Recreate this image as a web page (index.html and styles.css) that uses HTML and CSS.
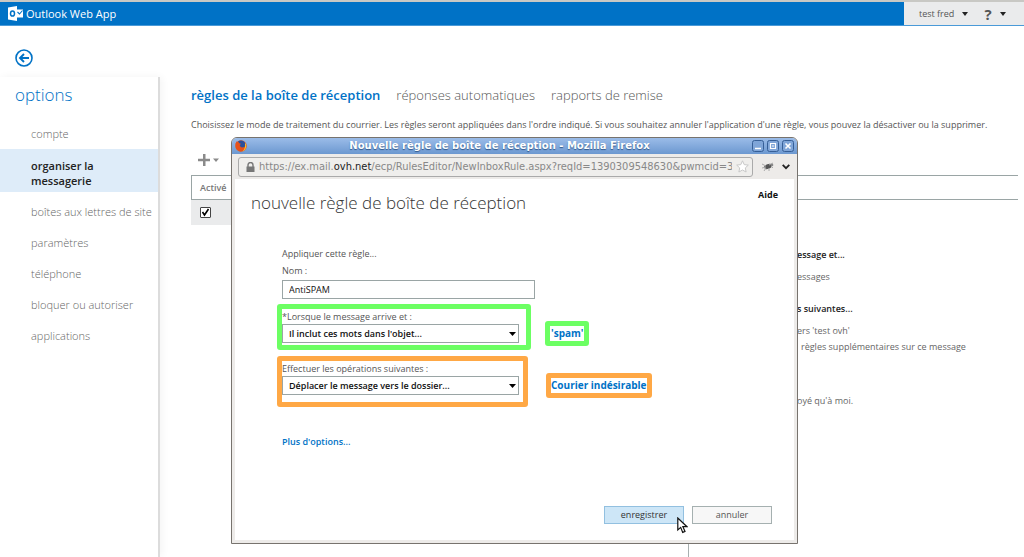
FILE: index.html
```html
<!DOCTYPE html>
<html lang="fr">
<head>
<meta charset="utf-8">
<title>Outlook Web App</title>
<link rel="stylesheet" href="styles.css">
</head>
<body>
<div class="page">
  <header class="topbar">
    <div class="brand">
      <svg class="brand-logo" width="15" height="15" viewBox="0 0 15 15" aria-hidden="true">
        <path d="M0 1.500 9 0v15L0 13.500z" fill="#fff"/>
        <ellipse cx="4.500" cy="7.500" rx="2" ry="2.600" fill="none" stroke="#0072c6" stroke-width="1.500"/>
        <path d="M9 3.500h6v8H9z" fill="#fff"/>
        <path d="m9.500 6 2 2L14.500 4.500" fill="none" stroke="#0072c6" stroke-width="1.100"/>
      </svg>
      <span>Outlook Web App</span>
    </div>
    <div class="account">
      <button class="account-name" type="button">test fred
        <svg width="6" height="4" viewBox="0 0 6 4" aria-hidden="true"><path d="M0 0h6L3 4z" fill="#222"/></svg>
      </button>
      <button class="account-help" type="button"><span>?</span>
        <svg width="6" height="4" viewBox="0 0 6 4" aria-hidden="true"><path d="M0 0h6L3 4z" fill="#222"/></svg>
      </button>
    </div>
  </header>

  <div class="back-row">
    <a class="back" href="#" aria-label="Retour">
      <svg width="18" height="18" viewBox="0 0 18 18" aria-hidden="true" fill="none" stroke="#0072c6" stroke-width="1.600">
        <circle cx="9" cy="9" r="8"/>
        <path d="M14 9H5.500M9 5 5 9l4 4" stroke-width="1.900"/>
      </svg>
    </a>
  </div>

  <div class="layout">
    <nav class="sidebar">
      <h1>options</h1>
      <ul>
        <li><a href="#">compte</a></li>
        <li><a class="current" href="#">organiser la messagerie</a></li>
        <li><a href="#">boîtes aux lettres de site</a></li>
        <li><a href="#">paramètres</a></li>
        <li><a href="#">téléphone</a></li>
        <li><a href="#">bloquer ou autoriser</a></li>
        <li><a href="#">applications</a></li>
      </ul>
    </nav>

    <main class="content">
      <div class="tabs">
        <a class="active" href="#">règles de la boîte de réception</a>
        <a href="#">réponses automatiques</a>
        <a href="#">rapports de remise</a>
      </div>
      <p class="intro">Choisissez le mode de traitement du courrier. Les règles seront appliquées dans l'ordre indiqué. Si vous souhaitez annuler l'application d'une règle, vous pouvez la désactiver ou la supprimer.</p>
      <div class="toolbar">
        <button type="button" aria-label="Nouveau">
          <svg width="22" height="12" viewBox="0 0 22 12" aria-hidden="true" fill="#8a8a8a"><path d="M5 0h2.500v4.800H12v2.500H7.500V12H5V7.300H0V4.800h5zM15 4.500h6l-3 3.500z"/></svg>
        </button>
      </div>
      <div class="list-head">Activé</div>
      <div class="panes">
        <div class="list">
          <div class="rule-row"><input type="checkbox" checked aria-label="Activé"></div>
        </div>
        <section class="details">
          <h2>essage et...</h2>
          <p>essages</p>
          <h2 class="actions">s suivantes...</h2>
          <p class="first">ers 'test ovh'</p>
          <p class="second">règles supplémentaires sur ce message</p>
          <p class="last">oyé qu'à moi.</p>
        </section>
      </div>
    </main>
  </div>

  <div class="window" role="dialog" aria-label="Nouvelle règle de boîte de réception">
    <div class="titlebar">
      <svg width="12" height="12" viewBox="0 0 12 12" aria-hidden="true">
        <circle cx="6" cy="6" r="5.800" fill="#e2591b"/>
        <path d="M3 1.500C6-.5 10 1 10.500 4.500 10.500 7 8.500 8 7 7.500 5 7 4 5 4.500 3.500z" fill="#2b4f9c"/>
        <path d="M.5 3.500 2 1l1 2 3 .8-1.500 1.700L6 8l4-1-1 3-4 1.500L1.500 9z" fill="#e8501a"/>
        <path d="M10.500 3c1.500 3 .5 7-3 8.500C10 9 10.500 6 10 4z" fill="#ffc928"/>
      </svg>
      <span class="title">Nouvelle règle de boîte de réception - Mozilla Firefox</span>
      <div class="window-buttons">
        <button type="button" aria-label="Réduire"><svg width="12" height="12" viewBox="0 0 12 12"><rect x=".5" y=".5" width="11" height="11" rx="2" fill="#7fa5d8" stroke="#365f97"/><path d="M3 8.500h6" stroke="#fff" stroke-width="1.500"/></svg></button>
        <button type="button" aria-label="Agrandir"><svg width="12" height="12" viewBox="0 0 12 12"><rect x=".5" y=".5" width="11" height="11" rx="2" fill="#7fa5d8" stroke="#365f97"/><path d="M3.500 3.500h5v5h-5zM5 6h2" fill="none" stroke="#fff" stroke-width="1.200"/></svg></button>
        <button type="button" aria-label="Fermer"><svg width="12" height="12" viewBox="0 0 12 12"><rect x=".5" y=".5" width="11" height="11" rx="2" fill="#7fa5d8" stroke="#365f97"/><path d="m3.500 3.500 5 5m0-5-5 5" stroke="#fff" stroke-width="1.600"/></svg></button>
      </div>
    </div>
    <div class="navbar">
      <div class="address">
        <svg width="9" height="10" viewBox="0 0 9 10" aria-hidden="true"><path d="M2 5V3a2.500 2.500 0 0 1 5 0v2" fill="none" stroke="#777" stroke-width="1.400"/><rect x=".5" y="4.500" width="8" height="5.500" fill="#777"/></svg>
        <span class="url">https://ex.mail.<b>ovh.net</b>/ecp/RulesEditor/NewInboxRule.aspx?reqId=1390309548630&amp;pwmcid=3</span>
        <svg width="13" height="13" viewBox="0 0 13 13" aria-hidden="true"><path d="m6.500.8 1.700 3.800 4.100.5-3 2.800.8 4.100-3.600-2-3.600 2 .8-4.100-3-2.800 4.100-.5z" fill="#fff" stroke="#c8c8c8"/></svg>
      </div>
      <svg width="13" height="11" viewBox="0 0 13 11" aria-hidden="true"><ellipse cx="7" cy="5.500" rx="4" ry="2.300" fill="#555" transform="rotate(-18 7 5.500)"/><path d="m1 3 4 2M1 7l4-1M5 7l-2 3M8 7v3M10 5l2 2M8 4l4-2" stroke="#aaa" fill="none"/><circle cx="11" cy="4" r="1.300" fill="#888"/></svg>
      <svg width="8" height="6" viewBox="0 0 8 6" aria-hidden="true"><path d="m.7.8 3.300 3.400L7.300.8" fill="none" stroke="#222" stroke-width="1.800"/></svg>
    </div>
    <form class="rule">
      <div class="rule-head">
        <h2>nouvelle règle de boîte de réception</h2>
        <a href="#">Aide</a>
      </div>
      <div class="fields">
        <p class="lead">Appliquer cette règle...</p>
        <div class="field name">
          <label for="nom">Nom :</label>
          <input id="nom" type="text" value="AntiSPAM">
        </div>
        <div class="line green">
          <div class="field frame">
            <label for="cond">*Lorsque le message arrive et :</label>
            <div class="select"><select id="cond"><option>Il inclut ces mots dans l'objet...</option></select>
            <svg width="7" height="4" viewBox="0 0 7 4" aria-hidden="true"><path d="M0 0h7L3.500 4z"/></svg></div>
          </div>
          <a class="value" href="#">'spam'</a>
        </div>
        <div class="line orange">
          <div class="field frame">
            <label for="act">Effectuer les opérations suivantes :</label>
            <div class="select"><select id="act"><option>Déplacer le message vers le dossier...</option></select>
            <svg width="7" height="4" viewBox="0 0 7 4" aria-hidden="true"><path d="M0 0h7L3.500 4z"/></svg></div>
          </div>
          <a class="value" href="#">Courier indésirable</a>
        </div>
        <a class="more" href="#">Plus d'options...</a>
      </div>
      <div class="actions-row">
        <button class="save" type="button">enregistrer</button>
        <button type="button">annuler</button>
      </div>
    </form>
    <svg class="pointer" width="11" height="17" viewBox="0 0 11 17" aria-hidden="true"><path d="M.8 1v12l2.900-2.600 2 5 2.300-1-2.100-4.700H10z" fill="#fff" stroke="#111" stroke-width="1.200"/></svg>
  </div>
</div>
</body>
</html>
```
FILE: styles.css
```css
* { box-sizing: border-box; }
body, h1, h2, p, ul { margin: 0; padding: 0; }
body {
  background: #fff;
  color: #555;
  font-family: "Open Sans", "Noto Sans", sans-serif;
  font-size: 9px;
  line-height: 16px;
}
a { color: inherit; text-decoration: none; }
button, input, select { font: inherit; color: inherit; }
button { border: 0; background: none; padding: 0; }
svg { display: block; flex: none; }

.page { position: relative; display: flex; flex-direction: column; min-height: 100vh; overflow: hidden; }

.topbar { display: flex; justify-content: space-between; height: 26px; border-top: 2px solid #c8c8c4; background: #0072c6; border-bottom: 1px solid #4a9ad8; }
.brand { display: flex; align-items: center; gap: 3px; padding-left: 8px; color: #fff; font-size: 11px; }
.account { display: flex; align-items: center; gap: 16px; width: 120px; padding-left: 15px; background: #eaebec; color: #555; font-weight: 500; }
.account button { display: flex; align-items: center; gap: 8px; }
.account-help span { font-size: 15px; font-weight: 700; }

.back-row { height: 51px; padding: 23px 15px 0; }
.back { display: inline-block; }

.layout { display: flex; flex: 1; }
.sidebar { width: 160px; flex: none; border-right: 2px solid #dcdcdc; box-shadow: 2px 0 8px #f4f4f4; }
.sidebar h1 { padding: 6px 15px 0; color: #0072c6; font-size: 17px; font-weight: 300; line-height: 24px; }
.sidebar ul { list-style: none; padding-top: 11px; }
.sidebar a { display: block; padding: 8px 0 8px 31px; color: #666; font-size: 11px; line-height: 15px; font-weight: 300; white-space: nowrap; }
.sidebar a.current { background: #deecf9; padding: 9px 40px 4px 31px; margin-bottom: 4px; color: #222; font-weight: 600; white-space: normal; }

.content { flex: 1; min-width: 0; padding: 6px 6px 0 31px; display: flex; flex-direction: column; }
.tabs { display: flex; gap: 16px; font-size: 13px; line-height: 24px; font-weight: 300; color: #555; white-space: nowrap; }
.tabs .active { color: #0072c6; font-weight: 600; }
.intro { padding-top: 10px; font-weight: 500; white-space: nowrap; }
.toolbar { padding: 21px 7px 4px; }
.list-head { height: 25px; padding: 0 8px; border: 1px solid #9aa5a5; border-right: 0; line-height: 23px; font-weight: 600; color: #777; }
.panes { display: grid; grid-template-columns: 498px 1fr; flex: 1; }
.list { border-right: 1px solid #a8b0b0; }
.rule-row { height: 25px; padding: 7px 9px; background: #eaebec; }
.rule-row input { display: block; appearance: none; width: 11px; height: 11px; margin: 0; border: 1px solid #444; border-radius: 1px; background: #fff url("data:image/svg+xml,%3Csvg xmlns='http://www.w3.org/2000/svg' viewBox='0 0 9 9'%3E%3Cpath d='m1.500 4 2 3L7.500 1' fill='none' stroke='%23000' stroke-width='1.600'/%3E%3C/svg%3E"); }
.details { padding: 47px 0 0 108px; white-space: nowrap; color: #666; }
.details h2 { font-size: 9px; font-weight: 600; color: #222; }
.details p { padding-top: 6px; font-weight: 400; }
.details .actions { padding-top: 16px; }
.details .second { padding: 0 0 0 4px; }
.details .last { padding-top: 38px; }

.window { position: absolute; left: 231px; top: 137px; width: 567px; background: #edebe9; border: 1px solid #77736e; border-radius: 6px 6px 0 0; }
.titlebar { display: flex; align-items: center; height: 16px; padding: 0 3px; border-radius: 5px 5px 0 0; background: linear-gradient(#9bbce8, #6c98d0); color: #fff; }
.title { flex: 1; text-align: center; font: 700 10px/16px "DejaVu Sans", sans-serif; text-shadow: 0 1px 1px #2f568a; }
.window-buttons { display: flex; gap: 3px; }
.navbar { display: flex; align-items: center; gap: 8px; height: 25px; padding: 0 7px 0 6px; }
.address { display: flex; align-items: center; gap: 4px; flex: 1; min-width: 0; height: 20px; padding: 0 3px 0 7px; border: 1px solid #aaa; border-radius: 3px; background: #efeeec; }
.url { flex: 1; overflow: hidden; white-space: nowrap; font: 11px/16px "DejaVu Sans Condensed", "DejaVu Sans", sans-serif; color: #888; }
.url b { color: #222; font-weight: 400; }
.rule { margin: 0 3px 3px; background: #fff; padding: 8px 16px 16px; }
.rule-head { display: flex; justify-content: space-between; }
.rule-head h2 { color: #333; font-size: 17px; font-weight: 300; line-height: 32px; }
.rule-head a { color: #111; font-weight: 700; }
.fields { padding: 27px 0 0 26px; font-weight: 500; }
.fields label { display: block; line-height: 18px; }
.lead, .name, .more { padding-left: 5px; }
.name { width: 258px; }
.field input, .field select { display: block; width: 100%; height: 19px; margin: 0; padding: 0 6px; border: 1px solid #9aa5a5; border-radius: 0; background: #fff; color: #111; line-height: 17px; }
.field select { appearance: none; font-weight: 600; }
.select { display: grid; align-items: center; }
.select select, .select svg { grid-area: 1 / 1; }
.select svg { justify-self: end; margin-right: 3px; pointer-events: none; }
.line { display: flex; align-items: center; }
.fields .frame label { line-height: 15px; }
.frame { border: 5px solid; border-radius: 3px; }
.value { padding: 0 1px; border: 5px solid; border-radius: 3px; line-height: 15px; font-size: 10px; font-weight: 700; white-space: nowrap; }
.value, .more { color: #0072c6; }
.green { padding-top: 5px; gap: 14px; }
.green .frame { width: 254px; padding: 0 7px 2px 0; }
.green .frame, .green .value { border-color: #6cff63; }
.green .value { margin-top: 12px; }
.orange { padding-top: 6px; gap: 18px; }
.orange .frame { width: 251px; padding: 0 4px 7px 0; }
.orange .frame, .orange .value { border-color: #ffa845; }
.orange .value { padding: 0; margin-top: 8px; }
.more { display: inline-block; margin-top: 27px; font-weight: 600; }
.actions-row { display: flex; justify-content: flex-end; gap: 8px; padding: 56px 6px 0 0; }
.actions-row button { width: 80px; height: 18px; border: 1px solid #a5b0b0; background: #f7f7f7; line-height: 16px; }
.actions-row .save { border-color: #92c0e0; background: #cde6f7; color: #333; }
.pointer { position: absolute; right: 109px; bottom: 9px; }
```
